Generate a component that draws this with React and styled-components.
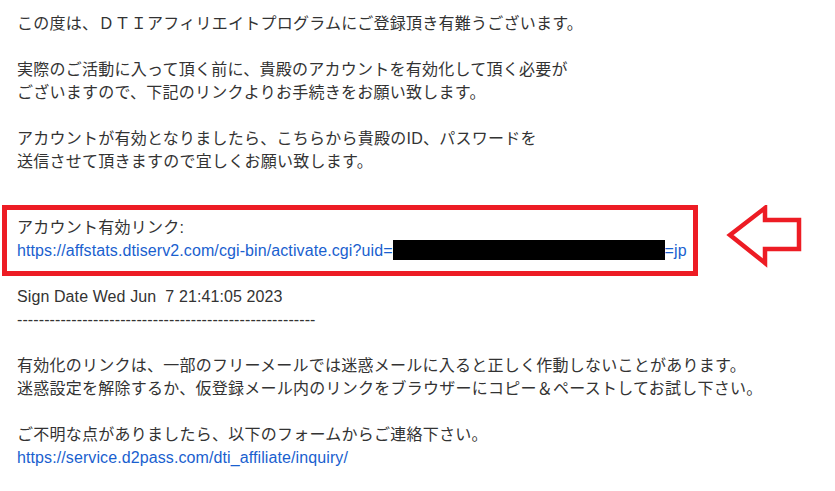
import React from 'react';
import styled, { createGlobalStyle } from 'styled-components';

const GlobalStyle = createGlobalStyle`
  html, body {
    margin: 0;
    padding: 0;
    background: #ffffff;
  }
  body {
    font-family: "Liberation Sans", Arial, "Noto Sans CJK JP", sans-serif;
  }
`;

const Mail = styled.div`
  width: 835px;
  height: 491px;
  box-sizing: border-box;
  padding: 12px 0 0 17px;
  color: #333333;
  font-size: 16px;
  line-height: 23px;
  letter-spacing: 0.25px;
  overflow: hidden;
`;

const Para = styled.p`
  margin: 0 0 ${(p) => p.$gap ?? 23}px;
  white-space: pre-wrap;
`;

const Latin = styled.span`
  letter-spacing: 0.1px;
`;

const Link = styled.a`
  color: #1a5fcf;
  text-decoration: none;
  letter-spacing: 0.1px;
`;

const HighlightRow = styled.div`
  display: flex;
  align-items: flex-start;
  gap: 22px;
  margin: 32px 0 8px -15px;
`;

const HighlightBox = styled.div`
  width: 696px;
  height: 71px;
  box-sizing: border-box;
  border: 5px solid #ed1c24;
  padding: 6px 0 0 10px;
`;

const Redacted = styled.span`
  display: inline-block;
  width: 272px;
  height: 20px;
  background: #000000;
  vertical-align: -4px;
`;

const Arrow = () => (
  <svg width="90" height="72" viewBox="0 0 90 72">
    <polygon
      points="10,30 45,3 45,15 79,15 79,44 45,44 45,58"
      fill="none"
      stroke="#ed1c24"
      strokeWidth="4.5"
      strokeLinejoin="miter"
    />
  </svg>
);

export default function App() {
  return (
    <>
      <GlobalStyle />
      <Mail>
        <Para>この度は、ＤＴＩアフィリエイトプログラムにご登録頂き有難うございます。</Para>
        <Para>
          実際のご活動に入って頂く前に、貴殿のアカウントを有効化して頂く必要が
          <br />
          ございますので、下記のリンクよりお手続きをお願い致します。
        </Para>
        <Para $gap={0}>
          アカウントが有効となりましたら、こちらから貴殿のID、パスワードを
          <br />
          送信させて頂きますので宜しくお願い致します。
        </Para>
        <HighlightRow>
          <HighlightBox>
            アカウント有効リンク:
            <br />
            <Link href="#">
              https://affstats.dtiserv2.com/cgi-bin/activate.cgi?uid=<Redacted />=jp
            </Link>
          </HighlightBox>
          <Arrow />
        </HighlightRow>
        <Para>
          <Latin>
            {'Sign Date Wed Jun  7 21:41:05 2023'}
            <br />
            -------------------------------------------------------
          </Latin>
        </Para>
        <Para>
          有効化のリンクは、一部のフリーメールでは迷惑メールに入ると正しく作動しないことがあります。
          <br />
          迷惑設定を解除するか、仮登録メール内のリンクをブラウザーにコピー＆ペーストしてお試し下さい。
        </Para>
        <Para>
          ご不明な点がありましたら、以下のフォームからご連絡下さい。
          <br />
          <Link href="#">https://service.d2pass.com/dti_affiliate/inquiry/</Link>
        </Para>
      </Mail>
    </>
  );
}
